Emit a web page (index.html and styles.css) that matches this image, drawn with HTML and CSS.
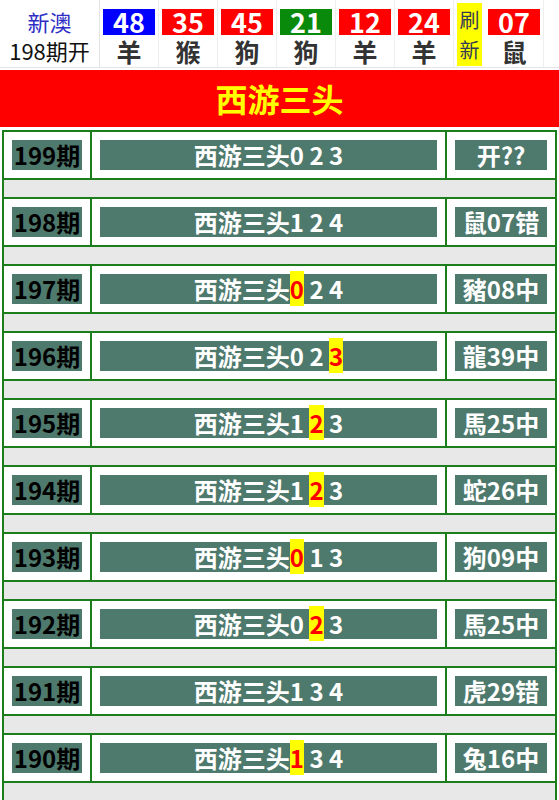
FILE: index.html
```html
<!DOCTYPE html>
<html lang="zh-CN">
<head>
    <meta charset="UTF-8">
    <meta name="viewport" content="width=device-width, initial-scale=1.0">
    <title>西游三头</title>
    <link rel="stylesheet" href="styles.css">
</head>
<body>
    <div class="draw">
        <div class="draw-info">
            <div class="draw-name">新澳</div>
            <div class="draw-no">198期开</div>
        </div>
        <div class="ball"><div class="num blue">48</div><div class="zod">羊</div></div>
        <div class="ball"><div class="num red">35</div><div class="zod">猴</div></div>
        <div class="ball"><div class="num red">45</div><div class="zod">狗</div></div>
        <div class="ball"><div class="num green">21</div><div class="zod">狗</div></div>
        <div class="ball"><div class="num red">12</div><div class="zod">羊</div></div>
        <div class="ball"><div class="num red">24</div><div class="zod">羊</div></div>
        <div class="refresh"><span>刷</span><span>新</span></div>
        <div class="ball"><div class="num red">07</div><div class="zod">鼠</div></div>
    </div>

    <div class="title">西游三头</div>

    <div class="board">
        <div class="cell"><div class="box period">199期</div></div>
        <div class="cell"><div class="box">西游三头0 2 3</div></div>
        <div class="cell"><div class="box">开??</div></div>
        <div class="gap"></div>

        <div class="cell"><div class="box period">198期</div></div>
        <div class="cell"><div class="box">西游三头1 2 4</div></div>
        <div class="cell"><div class="box">鼠07错</div></div>
        <div class="gap"></div>

        <div class="cell"><div class="box period">197期</div></div>
        <div class="cell"><div class="box">西游三头<span class="hit">0</span> 2 4</div></div>
        <div class="cell"><div class="box">豬08中</div></div>
        <div class="gap"></div>

        <div class="cell"><div class="box period">196期</div></div>
        <div class="cell"><div class="box">西游三头0 2 <span class="hit">3</span></div></div>
        <div class="cell"><div class="box">龍39中</div></div>
        <div class="gap"></div>

        <div class="cell"><div class="box period">195期</div></div>
        <div class="cell"><div class="box">西游三头1 <span class="hit">2</span> 3</div></div>
        <div class="cell"><div class="box">馬25中</div></div>
        <div class="gap"></div>

        <div class="cell"><div class="box period">194期</div></div>
        <div class="cell"><div class="box">西游三头1 <span class="hit">2</span> 3</div></div>
        <div class="cell"><div class="box">蛇26中</div></div>
        <div class="gap"></div>

        <div class="cell"><div class="box period">193期</div></div>
        <div class="cell"><div class="box">西游三头<span class="hit">0</span> 1 3</div></div>
        <div class="cell"><div class="box">狗09中</div></div>
        <div class="gap"></div>

        <div class="cell"><div class="box period">192期</div></div>
        <div class="cell"><div class="box">西游三头0 <span class="hit">2</span> 3</div></div>
        <div class="cell"><div class="box">馬25中</div></div>
        <div class="gap"></div>

        <div class="cell"><div class="box period">191期</div></div>
        <div class="cell"><div class="box">西游三头1 3 4</div></div>
        <div class="cell"><div class="box">虎29错</div></div>
        <div class="gap"></div>

        <div class="cell"><div class="box period">190期</div></div>
        <div class="cell"><div class="box">西游三头<span class="hit">1</span> 3 4</div></div>
        <div class="cell"><div class="box">兔16中</div></div>
        <div class="gap"></div>
    </div>
</body>
</html>
```

FILE: styles.css
```css
body {
    margin: 0;
    font-family: "Noto Sans CJK SC", "Noto Sans", sans-serif;
    background-color: #ffffff;
}
.draw {
    display: flex;
    height: 67px;
    border-bottom: 1px solid #e4e4e4;
}
.draw-info {
    width: 99px;
    border-right: 1px solid #e4e4e4;
    text-align: center;
    font-size: 22px;
    padding-top: 6px;
}
.draw-name {
    color: #2e2ec4;
    line-height: 30px;
}
.draw-no {
    color: #111;
    line-height: 28px;
}
.ball {
    width: 52px;
    padding: 9px 3px 0;
    border-right: 1px solid #eeeeee;
    text-align: center;
}
.ball .num {
    height: 26px;
    line-height: 26px;
    color: #fff;
    font-size: 27px;
    font-weight: bold;
}
.blue {
    background-color: #0000ff;
}
.red {
    background-color: #ff0000;
}
.green {
    background-color: #0a8a0a;
}
.ball .zod {
    margin-top: 2px;
    font-size: 25px;
    font-weight: bold;
    color: #333;
    line-height: 28px;
}
.refresh {
    width: 25px;
    margin: 3px 3px 1px;
    background-color: #ffff00;
    display: flex;
    flex-direction: column;
    justify-content: center;
    text-align: center;
    font-size: 20px;
    line-height: 30px;
    color: #333a55;
}
.title {
    margin-top: 2px;
    height: 57px;
    line-height: 57px;
    background-color: #ff0000;
    color: #ffff00;
    font-size: 32px;
    font-weight: bold;
    text-align: center;
}
.board {
    display: grid;
    grid-template-columns: 86px 1fr 108px;
    gap: 2px;
    padding: 2px;
    margin: 3px 2px 0;
    background-color: #1b7d1b;
}
.cell {
    background-color: #fff;
    padding: 8px;
}
.box {
    height: 30px;
    line-height: 30px;
    background-color: #4e796d;
    color: #fff;
    font-size: 24px;
    font-weight: bold;
    text-align: center;
    white-space: nowrap;
}
.box.period {
    color: #000;
}
.hit {
    background-color: #ffff00;
    color: #ff0000;
}
.gap {
    grid-column: 1 / -1;
    height: 17px;
    background-color: #e8e8e8;
}
```
